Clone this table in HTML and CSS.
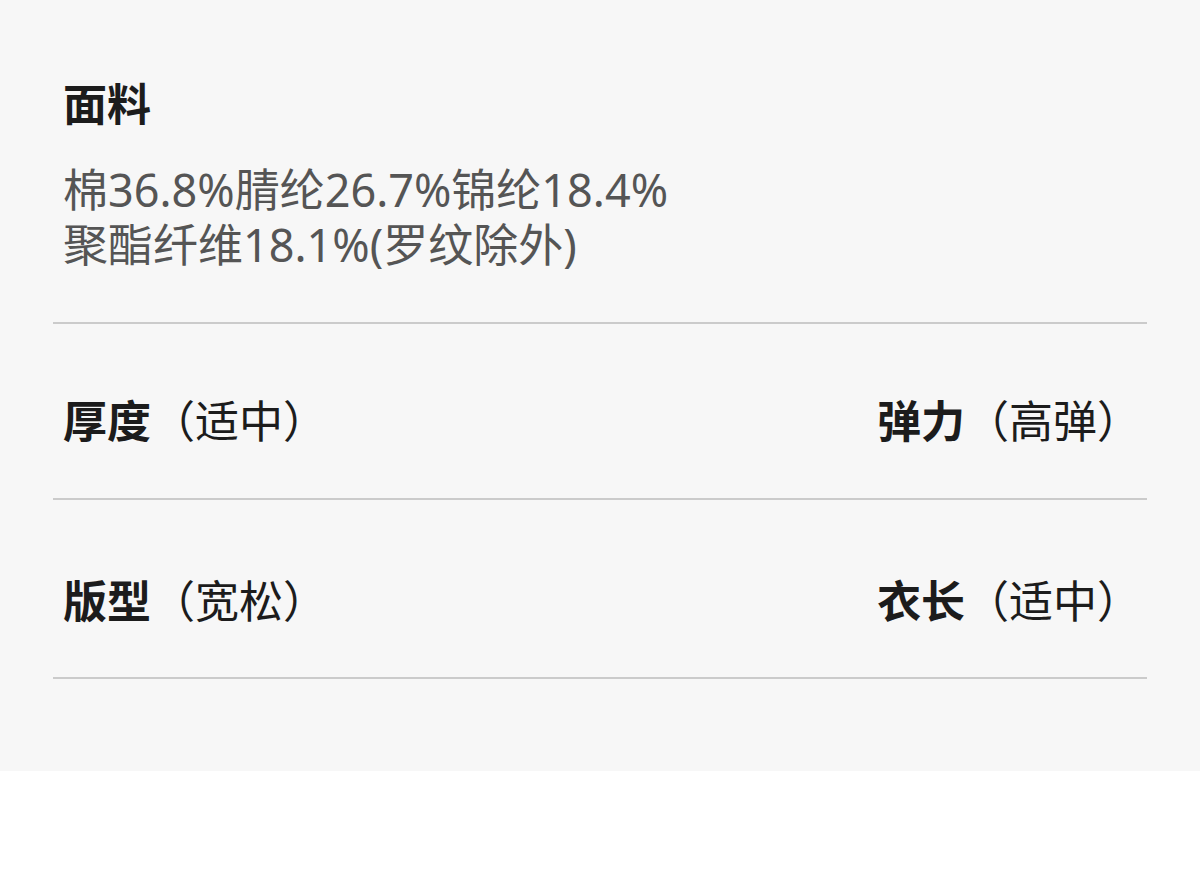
FILE: index.html
```html
<!DOCTYPE html>
<html lang="zh-CN">
<head>
<meta charset="utf-8">
<title>面料</title>
<link rel="stylesheet" href="styles.css">
</head>
<body>
<div class="panel">
  <section class="fabric">
    <h2 class="title">面料</h2>
    <p class="desc">棉36.8%腈纶26.7%锦纶18.4%<br>聚酯纤维18.1%(罗纹除外)</p>
  </section>
  <div class="row row-first">
    <div class="attr"><b>厚度</b>（适中）</div>
    <div class="attr"><b>弹力</b>（高弹）</div>
  </div>
  <div class="row row-second">
    <div class="attr"><b>版型</b>（宽松）</div>
    <div class="attr"><b>衣长</b>（适中）</div>
  </div>
</div>
</body>
</html>
```

FILE: styles.css
```css
html, body {
  margin: 0;
  padding: 0;
  background: #ffffff;
}
body {
  font-family: "Noto Sans CJK SC", "Noto Sans", sans-serif;
  color: #1c1c1c;
}
.panel {
  background: #f7f7f7;
  height: 771px;
  padding: 0 53px;
  box-sizing: border-box;
  display: flex;
  flex-direction: column;
}
.fabric {
  padding: 76px 10px 0;
  border-bottom: 2px solid #cbcbcb;
  height: 324px;
  box-sizing: border-box;
  flex: none;
}
.title {
  margin: 0;
  font-size: 44px;
  font-weight: 700;
  line-height: 52px;
  color: #1c1c1c;
}
.desc {
  margin: 34px 0 0;
  font-family: "Noto Sans", "Noto Sans CJK SC", sans-serif;
  font-size: 45px;
  line-height: 55px;
  color: #555555;
  font-weight: 400;
}
.row {
  display: flex;
  justify-content: space-between;
  align-items: flex-start;
  padding: 0 6px 0 10px;
  border-bottom: 2px solid #cbcbcb;
  box-sizing: border-box;
  flex: none;
}
.row-first {
  height: 176px;
  padding-top: 69px;
}
.row-second {
  height: 179px;
  padding-top: 73px;
}
.attr {
  font-size: 44px;
  line-height: 52px;
  color: #1c1c1c;
  white-space: nowrap;
}
.attr b {
  font-weight: 700;
}
```
